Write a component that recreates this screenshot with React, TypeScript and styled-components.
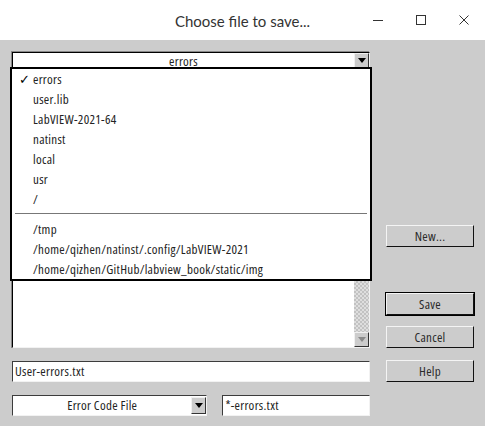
import React from 'react';
import styled, { createGlobalStyle } from 'styled-components';

const GlobalStyle = createGlobalStyle`
  html, body {
    margin: 0;
    padding: 0;
  }

  body {
    font-family: "Open Sans", "Noto Sans", sans-serif;
    font-stretch: condensed;
    letter-spacing: 0.28px;
    color: #222;
  }
`;

const StyledWindow = styled.div`
  width: 485px;
  height: 426px;

  display: flex;
  flex-direction: column;
  overflow: hidden;
`;

const StyledTitleBar = styled.div`
  height: 40px;
  background: #ffffff;

  display: grid;
  grid-template-columns: 1fr auto 1fr;
  align-items: center;
`;

const StyledTitle = styled.div`
  grid-column: 2;
  font-family: Lato, "Open Sans", sans-serif;
  font-stretch: normal;
  letter-spacing: 0;
  font-size: 15px;
  color: #333;
  padding-top: 1px;
`;

const StyledControls = styled.div`
  grid-column: 3;
  justify-self: end;
  height: 100%;

  display: flex;
`;

const StyledControlButton = styled.div`
  width: 43px;
  height: 100%;

  display: flex;
  align-items: center;
  justify-content: center;
`;

const StyledBody = styled.div`
  flex: 1;
  background: #cccccc;
  padding: 12px 11px 0 12px;

  display: flex;
  gap: 16px;
`;

const StyledLeftColumn = styled.div`
  width: 358px;
  position: relative;

  display: flex;
  flex-direction: column;
`;

const StyledRightColumn = styled.div`
  width: 88px;

  display: flex;
  flex-direction: column;
`;

const StyledCombo = styled.div<{ $width?: number }>`
  width: ${({ $width }) => ($width ? `${$width}px` : '100%')};
  height: 17px;
  box-sizing: border-box;
  background: #ffffff;
  border-top: 1px solid #000;
  border-left: 1px solid #000;
  border-right: 1px solid #f2f2f2;
  border-bottom: 1px solid #f2f2f2;
  box-shadow: -1px -1px 0 #888;

  display: flex;
  align-items: stretch;
  font-size: 13px;
`;

const StyledComboText = styled.div`
  flex: 1;
  text-align: center;
  line-height: 17px;
  white-space: nowrap;
`;

const StyledArrowBox = styled.div<{ $disabled?: boolean }>`
  width: 15px;
  box-sizing: border-box;
  background: #cccccc;
  border-top: 1px solid #f0f0f0;
  border-left: 1px solid #f0f0f0;
  border-right: 1px solid #333;
  border-bottom: 1px solid #333;

  display: flex;
  align-items: center;
  justify-content: center;

  &::after {
    content: '';
    width: 0;
    height: 0;
    border-left: 4px solid transparent;
    border-right: 4px solid transparent;
    border-top: 5px solid ${({ $disabled }) => ($disabled ? '#8a8a8a' : '#000')};
  }
`;

const StyledListBox = styled.div`
  height: 280px;
  margin-top: -1px;
  box-sizing: border-box;
  background: #ffffff;
  border-top: 1px solid #000;
  border-left: 1px solid #000;
  border-right: 1px solid #f2f2f2;
  border-bottom: 1px solid #f2f2f2;
  box-shadow: -1px 0 0 #888;

  display: flex;
`;

const StyledListContent = styled.div`
  flex: 1;
`;

const StyledScrollbar = styled.div`
  width: 15px;

  display: flex;
  flex-direction: column;
`;

const StyledScrollTrack = styled.div`
  flex: 1;
  background: repeating-conic-gradient(#c2c2c2 0 25%, #dedede 0 50%) 0 0 / 4px 4px;
`;

const StyledScrollArrow = styled(StyledArrowBox)`
  height: 15px;
  flex: none;
`;

const StyledTextField = styled.div<{ $width?: number }>`
  width: ${({ $width }) => ($width ? `${$width}px` : '100%')};
  height: 21px;
  box-sizing: border-box;
  background: #ffffff;
  border-top: 1px solid #3c3c3c;
  border-left: 1px solid #3c3c3c;
  border-right: 1px solid #f2f2f2;
  border-bottom: 1px solid #f2f2f2;
  padding-left: 2px;

  font-size: 13px;
  line-height: 19px;
`;

const StyledFieldRow = styled.div<{ $gap: number }>`
  margin-top: 13px;

  display: flex;
  gap: ${({ $gap }) => $gap}px;
`;

const StyledBottomCombo = styled(StyledCombo)`
  height: 21px;
  box-shadow: none;
  border-top-color: #3c3c3c;
  border-left-color: #3c3c3c;

  & > div:first-child {
    line-height: 19px;
  }

  & > div:last-child {
    margin: 1px 0;
  }
`;

const StyledButton = styled.div<{ $gapTop: number; $default?: boolean }>`
  height: 22px;
  margin-top: ${({ $gapTop }) => $gapTop}px;
  box-sizing: border-box;
  background: #cccccc;
  border-top: 1px solid #f4f4f4;
  border-left: 1px solid #f4f4f4;
  border-right: 1px solid #111;
  border-bottom: 1px solid #111;
  box-shadow: ${({ $default }) => ($default ? '0 0 0 1px #000' : 'none')};

  display: flex;
  align-items: center;
  justify-content: center;
  font-size: 13px;
  color: #2a2a2a;
`;

const StyledPopup = styled.div`
  position: absolute;
  left: -2px;
  top: 15px;
  width: 362px;
  box-sizing: border-box;
  background: #ffffff;
  border: 2px solid #000;
`;

const StyledMenuItem = styled.div`
  height: 20px;

  display: flex;
  align-items: center;
  font-size: 13px;
  color: #222;
  white-space: nowrap;
`;

const StyledCheck = styled.span`
  width: 21px;
  padding-left: 7px;
  box-sizing: border-box;
  font-family: "DejaVu Sans", sans-serif;
  font-stretch: normal;
  font-size: 13px;
  color: #000;
`;

const StyledSeparator = styled.div`
  height: 1px;
  margin: 4px 3px 5px;
  background: #777;
`;

const folders = ['errors', 'user.lib', 'LabVIEW-2021-64', 'natinst', 'local', 'usr', '/'];
const recent = ['/tmp', '/home/qizhen/natinst/.config/LabVIEW-2021', '/home/qizhen/GitHub/labview_book/static/img'];

const MinimizeIcon = () => (
  <svg width="12" height="12" viewBox="0 0 12 12">
    <line x1="1" y1="6.5" x2="11" y2="6.5" stroke="#333" strokeWidth="1" />
  </svg>
);

const MaximizeIcon = () => (
  <svg width="12" height="12" viewBox="0 0 12 12">
    <rect x="1.5" y="1.5" width="9" height="9" fill="none" stroke="#333" strokeWidth="1" />
  </svg>
);

const CloseIcon = () => (
  <svg width="12" height="12" viewBox="0 0 12 12">
    <path d="M1.5 1.5 L10.5 10.5 M10.5 1.5 L1.5 10.5" stroke="#333" strokeWidth="1" />
  </svg>
);

const App: React.FC = () => {
  return (
    <>
      <GlobalStyle />
      <StyledWindow>
        <StyledTitleBar>
          <StyledTitle>Choose file to save...</StyledTitle>
          <StyledControls>
            <StyledControlButton>
              <MinimizeIcon />
            </StyledControlButton>
            <StyledControlButton>
              <MaximizeIcon />
            </StyledControlButton>
            <StyledControlButton>
              <CloseIcon />
            </StyledControlButton>
          </StyledControls>
        </StyledTitleBar>

        <StyledBody>
          <StyledLeftColumn>
            <StyledCombo>
              <StyledComboText>errors</StyledComboText>
              <StyledArrowBox />
            </StyledCombo>

            <StyledListBox>
              <StyledListContent />
              <StyledScrollbar>
                <StyledScrollTrack />
                <StyledScrollArrow $disabled />
              </StyledScrollbar>
            </StyledListBox>

            <StyledFieldRow $gap={0}>
              <StyledTextField>User-errors.txt</StyledTextField>
            </StyledFieldRow>

            <StyledFieldRow $gap={15}>
              <StyledBottomCombo $width={196}>
                <StyledComboText>Error Code File</StyledComboText>
                <StyledArrowBox />
              </StyledBottomCombo>
              <StyledTextField $width={148}>*-errors.txt</StyledTextField>
            </StyledFieldRow>

            <StyledPopup>
              {folders.map((name, i) => (
                <StyledMenuItem key={name}>
                  <StyledCheck>{i === 0 ? '✓' : ''}</StyledCheck>
                  {name}
                </StyledMenuItem>
              ))}
              <StyledSeparator />
              {recent.map((path) => (
                <StyledMenuItem key={path}>
                  <StyledCheck />
                  {path}
                </StyledMenuItem>
              ))}
            </StyledPopup>
          </StyledLeftColumn>

          <StyledRightColumn>
            <StyledButton $gapTop={173}>New...</StyledButton>
            <StyledButton $gapTop={46} $default>
              Save
            </StyledButton>
            <StyledButton $gapTop={11}>Cancel</StyledButton>
            <StyledButton $gapTop={12}>Help</StyledButton>
          </StyledRightColumn>
        </StyledBody>
      </StyledWindow>
    </>
  );
};

export default App;
